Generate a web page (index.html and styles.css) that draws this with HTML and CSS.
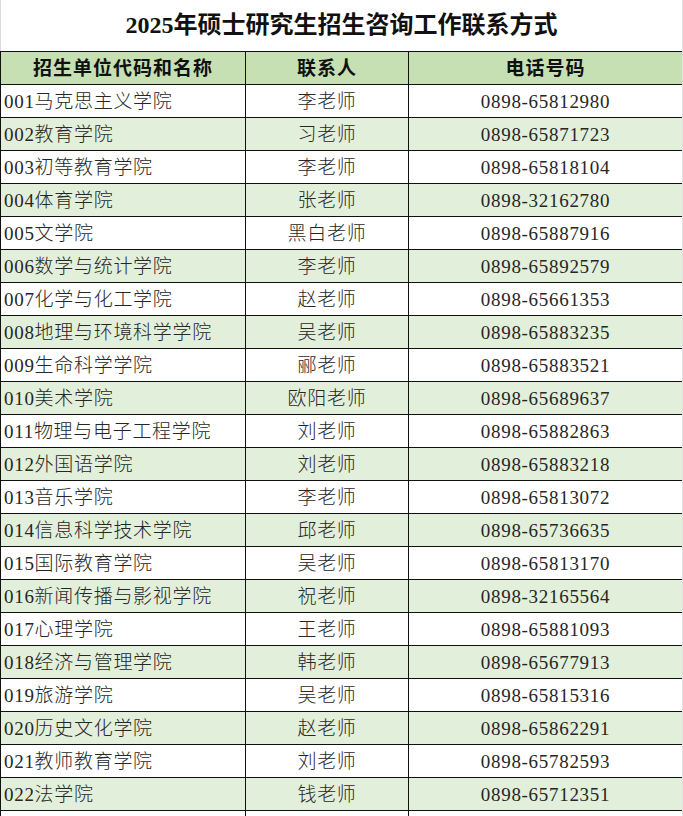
FILE: index.html
```html
<!DOCTYPE html>
<html lang="zh-CN">
<head>
<meta charset="utf-8">
<title>2025年硕士研究生招生咨询工作联系方式</title>
<link rel="stylesheet" href="styles.css">
</head>
<body>
<div class="page">
  <h1 class="title">2025年硕士研究生招生咨询工作联系方式</h1>
  <table class="contacts">
    <colgroup>
      <col class="c-unit">
      <col class="c-person">
      <col class="c-phone">
    </colgroup>
    <thead>
      <tr class="head-row">
        <th>招生单位代码和名称</th>
        <th>联系人</th>
        <th>电话号码</th>
      </tr>
    </thead>
    <tbody>
      <tr><td class="unit">001马克思主义学院</td><td class="person">李老师</td><td class="phone">0898-65812980</td></tr>
      <tr class="alt"><td class="unit">002教育学院</td><td class="person">习老师</td><td class="phone">0898-65871723</td></tr>
      <tr><td class="unit">003初等教育学院</td><td class="person">李老师</td><td class="phone">0898-65818104</td></tr>
      <tr class="alt"><td class="unit">004体育学院</td><td class="person">张老师</td><td class="phone">0898-32162780</td></tr>
      <tr><td class="unit">005文学院</td><td class="person">黑白老师</td><td class="phone">0898-65887916</td></tr>
      <tr class="alt"><td class="unit">006数学与统计学院</td><td class="person">李老师</td><td class="phone">0898-65892579</td></tr>
      <tr><td class="unit">007化学与化工学院</td><td class="person">赵老师</td><td class="phone">0898-65661353</td></tr>
      <tr class="alt"><td class="unit">008地理与环境科学学院</td><td class="person">吴老师</td><td class="phone">0898-65883235</td></tr>
      <tr><td class="unit">009生命科学学院</td><td class="person">郦老师</td><td class="phone">0898-65883521</td></tr>
      <tr class="alt"><td class="unit">010美术学院</td><td class="person">欧阳老师</td><td class="phone">0898-65689637</td></tr>
      <tr><td class="unit">011物理与电子工程学院</td><td class="person">刘老师</td><td class="phone">0898-65882863</td></tr>
      <tr class="alt"><td class="unit">012外国语学院</td><td class="person">刘老师</td><td class="phone">0898-65883218</td></tr>
      <tr><td class="unit">013音乐学院</td><td class="person">李老师</td><td class="phone">0898-65813072</td></tr>
      <tr class="alt"><td class="unit">014信息科学技术学院</td><td class="person">邱老师</td><td class="phone">0898-65736635</td></tr>
      <tr><td class="unit">015国际教育学院</td><td class="person">吴老师</td><td class="phone">0898-65813170</td></tr>
      <tr class="alt"><td class="unit">016新闻传播与影视学院</td><td class="person">祝老师</td><td class="phone">0898-32165564</td></tr>
      <tr><td class="unit">017心理学院</td><td class="person">王老师</td><td class="phone">0898-65881093</td></tr>
      <tr class="alt"><td class="unit">018经济与管理学院</td><td class="person">韩老师</td><td class="phone">0898-65677913</td></tr>
      <tr><td class="unit">019旅游学院</td><td class="person">吴老师</td><td class="phone">0898-65815316</td></tr>
      <tr class="alt"><td class="unit">020历史文化学院</td><td class="person">赵老师</td><td class="phone">0898-65862291</td></tr>
      <tr><td class="unit">021教师教育学院</td><td class="person">刘老师</td><td class="phone">0898-65782593</td></tr>
      <tr class="alt"><td class="unit">022法学院</td><td class="person">钱老师</td><td class="phone">0898-65712351</td></tr>
      <tr><td class="unit"></td><td class="person"></td><td class="phone"></td></tr>
    </tbody>
  </table>
</div>
</body>
</html>
```

FILE: styles.css
```css
html, body {
  margin: 0;
  padding: 0;
  background: #ffffff;
}

.page {
  width: 682px;
  border-right: 1px solid #e3e3e3;
  min-height: 816px;
  overflow: hidden;
}

.title {
  margin: 0;
  height: 51px;
  display: flex;
  align-items: center;
  justify-content: center;
  border-left: 1px solid #dcdcdc;
  font-family: "Liberation Serif", "Noto Sans CJK SC", serif;
  font-weight: bold;
  font-size: 24px;
  color: #111;
  letter-spacing: 0;
  box-sizing: border-box;
  padding-bottom: 7px;
}

.contacts {
  width: 682px;
  border-collapse: collapse;
  table-layout: fixed;
  font-family: "Liberation Serif", "Noto Sans CJK SC", serif;
  font-size: 19px;
  color: #262626;
}

.c-unit { width: 245px; }
.c-person { width: 163px; }
.c-phone { width: 274px; }

.contacts tr {
  height: 33px;
}

.contacts th,
.contacts td {
  border: 1px solid #111;
  padding: 2px 0 0 0;
  white-space: nowrap;
  overflow: hidden;
  vertical-align: middle;
  line-height: 22px;
}

.head-row {
  background: #c6e0b4;
}

.contacts th {
  font-weight: bold;
  color: #111;
  text-align: center;
  letter-spacing: 1px;
}

.contacts td {
  font-weight: 300;
  letter-spacing: 0.7px;
}

.contacts tr.alt {
  background: #e2efda;
}

.unit {
  text-align: left;
  padding-left: 3px !important;
}

.person,
.phone {
  text-align: center;
}
```
